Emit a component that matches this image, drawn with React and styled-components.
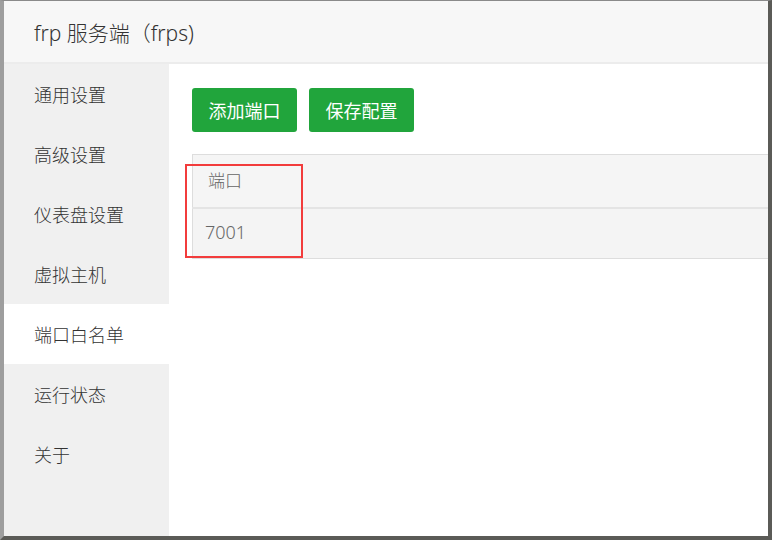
import React from 'react';
import styled, { createGlobalStyle } from 'styled-components';

const GlobalStyle = createGlobalStyle`
  html, body {
    margin: 0;
    padding: 0;
    background: #9c9c9c;
  }
  body {
    font-family: "Noto Sans", "Noto Sans CJK SC", sans-serif;
  }
`;

const menu = ['通用设置', '高级设置', '仪表盘设置', '虚拟主机', '端口白名单', '运行状态', '关于'];

const App = () => {
  return (
    <>
      <GlobalStyle />
      <Window>
        <Header>
          <Title>frp 服务端（frps)</Title>
        </Header>
        <Body>
          <Sidebar>
            {menu.map((item) => (
              <MenuItem key={item} active={item === '端口白名单'}>
                {item}
              </MenuItem>
            ))}
          </Sidebar>
          <Content>
            <Toolbar>
              <Button>添加端口</Button>
              <Button>保存配置</Button>
            </Toolbar>
            <TableWrap>
              <Table>
                <thead>
                  <tr>
                    <HeadCell>端口</HeadCell>
                  </tr>
                </thead>
                <tbody>
                  <tr>
                    <Cell>7001</Cell>
                  </tr>
                </tbody>
              </Table>
              <Highlight />
            </TableWrap>
          </Content>
        </Body>
      </Window>
    </>
  );
};

const Window = styled.div`
  display: flex;
  flex-direction: column;
  width: 764px;
  height: 535px;
  box-sizing: content-box;
  border-top: 1px solid #8a8a8a;
  border-left: 4px solid #9e9e9e;
  border-right: 4px solid #5b5b57;
  border-bottom: 4px solid #5b5b57;
  background: #fff;
  overflow: hidden;
`;

const Header = styled.div`
  display: flex;
  align-items: center;
  height: 61px;
  padding-left: 30px;
  background: #f7f7f7;
  border-bottom: 2px solid #ececec;
  flex-shrink: 0;
`;

const Title = styled.h1`
  margin: 0;
  font-size: 21px;
  font-weight: 300;
  color: #333;
`;

const Body = styled.div`
  display: flex;
  flex: 1;
  min-height: 0;
`;

const Sidebar = styled.div`
  width: 165px;
  flex-shrink: 0;
  background: #f0f0f0;
`;

const MenuItem = styled.div`
  display: flex;
  align-items: center;
  height: 60px;
  padding-left: 30px;
  font-size: 18px;
  font-weight: 300;
  color: #333;
  background: ${({ active }) => (active ? '#fff' : 'transparent')};
`;

const Content = styled.div`
  flex: 1;
  min-width: 0;
  padding: 24px 0 0 23px;
  background: #fff;
`;

const Toolbar = styled.div`
  display: flex;
  gap: 12px;
`;

const Button = styled.button`
  width: 105px;
  height: 44px;
  padding: 0;
  border: none;
  border-radius: 3px;
  background: #21a53c;
  color: #fff;
  font-family: "Noto Sans", "Noto Sans CJK SC", sans-serif;
  font-size: 18px;
  font-weight: 400;
`;

const TableWrap = styled.div`
  position: relative;
  margin-top: 22px;
  width: 640px;
`;

const Table = styled.table`
  width: 100%;
  border-collapse: collapse;
  border: 1px solid #dddddd;
`;

const HeadCell = styled.th`
  height: 49px;
  padding: 0 0 3px 15px;
  text-align: left;
  font-size: 17px;
  font-weight: 300;
  color: #666;
  background: #f5f5f5;
  border-bottom: 2px solid #e4e4e4;
`;

const Cell = styled.td`
  height: 46px;
  padding: 0 0 3px 12px;
  font-size: 18px;
  font-weight: 300;
  color: #666;
  background: #f4f4f4;
`;

const Highlight = styled.div`
  position: absolute;
  left: -7px;
  top: 10px;
  width: 114px;
  height: 90px;
  border: 2px solid #f23c3c;
  pointer-events: none;
`;

export default App;
